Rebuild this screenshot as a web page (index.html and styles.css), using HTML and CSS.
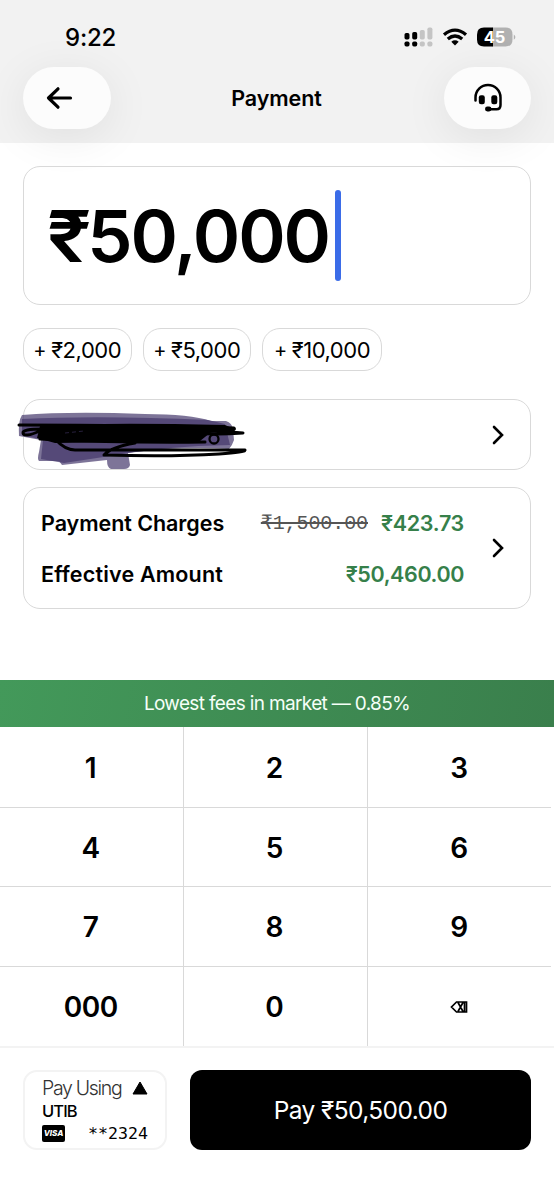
FILE: index.html
```
<!DOCTYPE html>
<html lang="en">
<head>
<meta charset="utf-8">
<title>Payment</title>
<link rel="stylesheet" href="styles.css">
</head>
<body>
<div class="screen">
  <header class="header">
    <div class="status">
      <span class="time">9:22</span>
      <svg class="status-icons" width="114" height="24" viewBox="0 0 114 24">
        <g fill="#000"><rect x="0.5" y="8" width="5" height="6.5" rx="1.7"/><rect x="8.200" y="7" width="5" height="7.500" rx="1.700"/><rect x="0.500" y="16.500" width="5" height="5" rx="1.700"/><rect x="8.200" y="16.500" width="5" height="5" rx="1.700"/></g>
        <g fill="#c4c4c4"><rect x="15.800" y="5" width="5" height="9.500" rx="1.700"/><rect x="23.400" y="2.500" width="5" height="12" rx="1.700"/><rect x="15.800" y="16.500" width="5" height="5" rx="1.700"/><rect x="23.400" y="16.500" width="5" height="5" rx="1.700"/></g>
        <g fill="none" stroke="#000" stroke-width="3.300"><path d="M40 9.700Q51 0.500 62 9.700"/><path d="M43.800 14Q51 8 58.200 14"/></g>
        <path d="M47.300 16.700Q51 14 54.700 16.700L51 20.500Z"/>
        <path fill="#b1b1b1" d="M88.500 2.500H101.500Q108.500 2.500 108.500 9.500V14.500Q108.500 21.500 101.500 21.500H88.500Z"/>
        <path d="M89 2.500H80Q73 2.500 73 9.500V14.500Q73 21.500 80 21.500H89Z"/>
        <path fill="#b1b1b1" d="M109.800 9.500Q113 12 109.800 14.800Z"/>
        <text class="battery" x="90.500" y="17.700">45</text>
      </svg>
    </div>
    <div class="nav">
      <div class="pill back"><svg width="28" height="24" viewBox="0 0 28 24"><path d="M24.500 12H2.500M12 2.800L2.500 12L12 21.200" fill="none" stroke="#000" stroke-width="3.200" stroke-linecap="round" stroke-linejoin="round"/></svg></div>
      <h1 class="title">Payment</h1>
      <div class="pill help"><svg width="30" height="30" viewBox="0 0 30 30"><path d="M2.500 17.500V14.500A12.300 12.300 0 0 1 27.500 14.500V22Q27.500 26.300 23.500 26.300H15" fill="none" stroke="#000" stroke-width="2.500" stroke-linecap="round"/><rect x="5.800" y="12.300" width="6" height="9" rx="2.200"/><rect x="18.300" y="12.300" width="6" height="9" rx="2.200"/><rect x="12" y="23.500" width="6.500" height="5" rx="2.400"/></svg></div>
    </div>
  </header>
  <main class="content">
    <div class="card amount"><span class="amount-text"><span class="rupee">₹</span>50,000</span><span class="caret"></span></div>
    <div class="chips"><span class="chip"><span class="plus">+</span>₹2,000</span><span class="chip"><span class="plus">+</span>₹5,000</span><span class="chip wide"><span class="plus">+</span>₹10,000</span></div>
    <div class="card account">
      <svg class="scribble" width="236" height="62" viewBox="14 410 236 62">
        <g fill="#4b3e70">
          <path opacity=".72" d="M22 415Q70 411 145 414Q190 414 211 421L226 421Q232 423 233 429L234 440Q232 446 229 449Q180 446 128 453L130 465Q129 469 124 469H111Q107 468 107 460L62 465L59 461L39 461Q37 459 39 452L41 440L19 436Q18 421 22 415Z"/>
          <path opacity=".8" d="M22 419Q100 415 208 420L225 424L230 445Q165 446 110 456L64 463L41 459L43 440L22 435Z"/>
        </g>
        <path d="M40 426Q100 422 225 425L234 429L210 433L200 441L55 443L37 438Z"/>
        <g fill="none" stroke="#000" stroke-width="3" stroke-linecap="round" stroke-linejoin="round">
          <path d="M19 425Q140 425 234 428Q238 432 205 430L243 433Q215 435 195 433"/>
          <path d="M43 429Q22 429 23 433Q24 438 40 431Q52 426 55 439Q65 450 75 450H245Q246 452 219 454Q170 457 104 455Q111 447 135 443"/>
          <path d="M40 439Q120 443 205 442"/><circle cx="214" cy="439" r="4.500" stroke-width="2.300"/><path d="M196 441L205 432"/>
        </g>
        <path d="M65 433L84 431" stroke="#27203d" stroke-width="1" stroke-dasharray="4 3"/>
      </svg>
      <svg class="chevron" width="12" height="20" viewBox="0 0 12 20"><path d="M2 2L10 10L2 18"/></svg>
    </div>
    <div class="card charges">
      <div class="lines">
        <div class="line"><span class="label pc">Payment Charges</span><span class="values"><s class="old">₹1,500.00</s><span class="green fee">₹423.73</span></span></div>
        <div class="line"><span class="label ea">Effective Amount</span><span class="green total">₹50,460.00</span></div>
      </div>
      <svg class="chevron" width="12" height="20" viewBox="0 0 12 20"><path d="M2 2L10 10L2 18"/></svg>
    </div>
  </main>
  <div class="banner"><span>Lowest fees in market — 0.85%</span></div>
  <div class="keypad">
    <span class="key">1</span><span class="key">2</span><span class="key">3</span>
    <span class="key">4</span><span class="key">5</span><span class="key">6</span>
    <span class="key">7</span><span class="key">8</span><span class="key">9</span>
    <span class="key triple">000</span><span class="key">0</span><span class="key"><svg width="18" height="14" viewBox="0 0 18 14"><path d="M6.500 2H16.500V12H6.500L1.500 7ZM8 2.500L13 11.500M13 2.500L8 11.500M14.500 2V12" fill="none" stroke="#000" stroke-width="1.700"/></svg></span>
  </div>
  <footer class="footer">
    <div class="method">
      <div class="method-top"><span class="using">Pay Using</span><svg width="16" height="14" viewBox="0 0 16 14"><path d="M8 1L15 13H1Z" stroke="#000" stroke-linejoin="round"/></svg></div>
      <div class="bank">UTIB</div>
      <div class="method-card"><span class="visa">VISA</span><span class="digits">**2324</span></div>
    </div>
    <div class="pay"><span>Pay ₹50,500.00</span></div>
  </footer>
</div>
</body>
</html>
```
FILE: styles.css
```
* { box-sizing: border-box; }
body { margin: 0; background: #fff; font-family: Inter, "Liberation Sans", sans-serif; color: #000; }
.screen { width: 554px; height: 1199px; display: flex; flex-direction: column; overflow: hidden; background: #fff; white-space: nowrap; }
svg { display: block; flex: none; }
.header { height: 143px; flex: none; background: #f2f2f2; padding: 0 23px; }
.status { height: 67px; padding: 18px 13px 0 42px; display: flex; justify-content: space-between; }
.time { font-size: 24px; line-height: 40px; font-weight: 500; letter-spacing: -0.2px; }
.status-icons { margin-top: 7px; }
.battery { font-size: 16.5px; font-weight: 700; fill: #fff; text-anchor: middle; }
.nav { display: flex; justify-content: space-between; height: 62px; align-items: center; }
.pill { width: 88px; height: 62px; border-radius: 31px; background: #fcfcfc; box-shadow: 0 8px 46px rgba(0,0,0,.08); display: flex; align-items: center; }
.back { padding-left: 23px; }
.help { width: 87px; padding-left: 29px; }
.title { margin: 0 2px 0 0; font-size: 21.5px; line-height: 64px; font-weight: 600; letter-spacing: -0.1px; }
.content { height: 537px; padding: 23px 23px 0; flex: none; }
.card { border: 1px solid #d9d9d9; border-radius: 17px; display: flex; align-items: center; }
.amount { height: 139px; padding-left: 23px; }
.amount-text { font-size: 72px; line-height: 90px; font-weight: 600; letter-spacing: -2.1px; width: 288px; }
.rupee { display: inline-block; transform: scaleX(1.1); transform-origin: left; margin-right: 2px; }
.caret { width: 6px; height: 91px; border-radius: 3px; background: #3b6ce8; }
.chips { display: flex; gap: 11px; margin-top: 23px; }
.chip { width: 108.5px; height: 43px; border: 1px solid #d9d9d9; border-radius: 18px; display: flex; gap: 5px; align-items: center; justify-content: center; font-size: 22px; letter-spacing: -0.45px; padding-top: 1px; }
.wide { width: 120px; }
.plus { font-size: 20px; }
.account { margin-top: 28px; height: 71px; position: relative; justify-content: flex-end; padding-right: 26px; }
.scribble { position: absolute; left: -10px; top: 10px; }
.chevron path { fill: none; stroke: #000; stroke-width: 2.6; stroke-linecap: round; }
.charges { height: 122px; margin-top: 17px; padding: 0 26px 0 17px; justify-content: space-between; }
.lines { width: 423px; }
.line { display: flex; justify-content: space-between; align-items: center; height: 51px; font-size: 21.5px; font-weight: 600; }
.pc { letter-spacing: -0.05px; }
.ea { letter-spacing: 0.18px; }
.fee { letter-spacing: -0.3px; }
.total { letter-spacing: -0.4px; }
.values { display: flex; gap: 13px; align-items: center; }
.old { font-family: "Liberation Mono", monospace; font-size: 20px; font-weight: 400; color: #555; letter-spacing: -0.1px; }
.green { color: #36804a; }
.banner { height: 47px; flex: none; background: linear-gradient(100deg, #43995a, #3a7f4c); color: #f5fff7; font-size: 19px; letter-spacing: -0.65px; display: flex; align-items: center; justify-content: center; }
.keypad { height: 319px; width: 551px; flex: none; display: grid; grid-template-columns: 183.5px 184px 183.5px; grid-template-rows: 80.5px 79.5px 79.5px 79.5px; overflow: hidden; }
.key { display: flex; align-items: center; justify-content: center; font-size: 28px; font-weight: 600; border-right: 1px solid #d9d9d9; border-bottom: 1px solid #d9d9d9; padding: 2px 1px 0 0; }
.key:nth-child(3n) { border-right: 0; padding-right: 0; }
.key:nth-child(n+10) { border-bottom: 0; }
.triple { letter-spacing: -0.4px; }
.footer { height: 153px; flex: none; border-top: 2px solid #f3f3f3; padding: 22px 23px 0; display: flex; justify-content: space-between; }
.method { width: 144px; height: 80px; border: 2px solid #f3f3f3; border-radius: 14px; padding: 4px 17px 0; }
.method-top { display: flex; align-items: center; justify-content: space-between; height: 24px; }
.using { font-size: 19.5px; font-weight: 300; color: #333; letter-spacing: -1.3px; }
.bank { font-size: 16.5px; line-height: 22px; font-weight: 500; letter-spacing: -0.9px; }
.method-card { height: 23px; display: flex; justify-content: space-between; align-items: center; }
.visa { width: 23px; height: 17px; border-radius: 2px; background: #000; color: #fff; font-size: 8px; line-height: 17px; font-weight: 800; font-style: italic; text-align: center; }
.digits { font-family: "DejaVu Sans Mono", monospace; font-size: 16.6px; }
.pay { width: 341px; height: 80px; border-radius: 12px; background: #000; color: #fff; font-size: 24.5px; letter-spacing: -0.6px; display: flex; align-items: center; justify-content: center; }
```
